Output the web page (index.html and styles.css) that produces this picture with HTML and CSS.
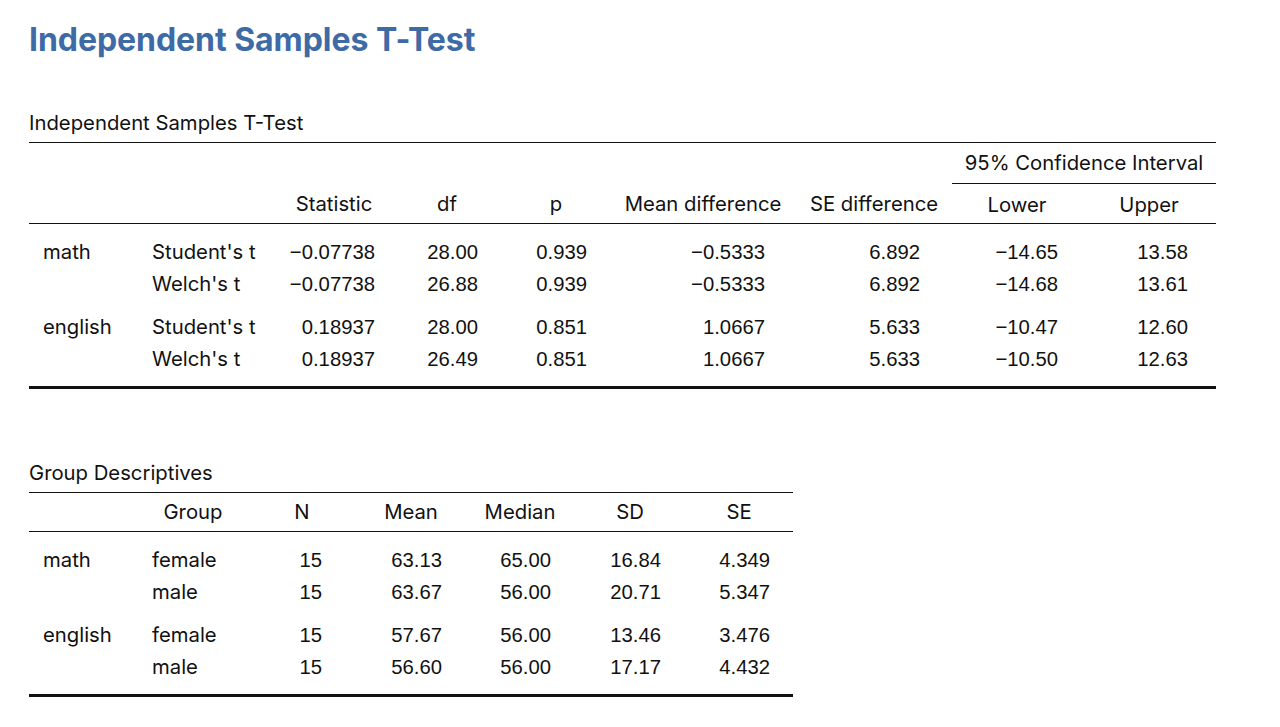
FILE: index.html
```html
<!DOCTYPE html>
<html lang="en">
<head>
<meta charset="utf-8">
<title>Independent Samples T-Test</title>
<link rel="stylesheet" href="styles.css">
</head>
<body>
<main class="page">
  <h1 class="title">Independent Samples T-Test</h1>

  <section class="analysis analysis-ttest">
    <div class="caption">Independent Samples T-Test</div>
    <table class="stats ttest">
      <colgroup>
        <col class="w110"><col class="w137"><col class="w116"><col class="w110"><col class="w108"><col class="w186"><col class="w156"><col class="w130"><col class="w134">
      </colgroup>
      <thead>
        <tr class="super">
          <th colspan="7"></th>
          <th colspan="2" class="ci">95% Confidence Interval</th>
        </tr>
        <tr class="heads">
          <th></th><th></th><th>Statistic</th><th>df</th><th>p</th><th>Mean difference</th><th>SE difference</th><th class="low">Lower</th><th class="low">Upper</th>
        </tr>
      </thead>
      <tbody>
        <tr><td class="var">math</td><td class="lab">Student's t</td><td>−0.07738</td><td>28.00</td><td>0.939</td><td>−0.5333</td><td>6.892</td><td>−14.65</td><td>13.58</td></tr>
        <tr><td class="var"></td><td class="lab">Welch's t</td><td>−0.07738</td><td>26.88</td><td>0.939</td><td>−0.5333</td><td>6.892</td><td>−14.68</td><td>13.61</td></tr>
      </tbody>
      <tbody>
        <tr><td class="var">english</td><td class="lab">Student's t</td><td>0.18937</td><td>28.00</td><td>0.851</td><td>1.0667</td><td>5.633</td><td>−10.47</td><td>12.60</td></tr>
        <tr><td class="var"></td><td class="lab">Welch's t</td><td>0.18937</td><td>26.49</td><td>0.851</td><td>1.0667</td><td>5.633</td><td>−10.50</td><td>12.63</td></tr>
      </tbody>
    </table>
  </section>

  <section class="analysis analysis-desc">
    <div class="caption">Group Descriptives</div>
    <table class="stats desc">
      <colgroup>
        <col class="w110"><col class="w108"><col class="w110"><col class="w108"><col class="w110"><col class="w110"><col class="w108">
      </colgroup>
      <thead>
        <tr class="heads">
          <th></th><th>Group</th><th>N</th><th>Mean</th><th>Median</th><th>SD</th><th>SE</th>
        </tr>
      </thead>
      <tbody>
        <tr><td class="var">math</td><td class="lab">female</td><td>15</td><td>63.13</td><td>65.00</td><td>16.84</td><td>4.349</td></tr>
        <tr><td class="var"></td><td class="lab">male</td><td>15</td><td>63.67</td><td>56.00</td><td>20.71</td><td>5.347</td></tr>
      </tbody>
      <tbody>
        <tr><td class="var">english</td><td class="lab">female</td><td>15</td><td>57.67</td><td>56.00</td><td>13.46</td><td>3.476</td></tr>
        <tr><td class="var"></td><td class="lab">male</td><td>15</td><td>56.60</td><td>56.00</td><td>17.17</td><td>4.432</td></tr>
      </tbody>
    </table>
  </section>
</main>
</body>
</html>
```

FILE: styles.css
```css
html, body {
  margin: 0;
  padding: 0;
  background: #ffffff;
}

body {
  font-family: Inter, "Liberation Sans", sans-serif;
  color: #111111;
}

.page {
  padding: 0 0 0 29px;
}

.title {
  margin: 0;
  padding-top: 20px;
  font-size: 32px;
  line-height: 40px;
  font-weight: 700;
  color: #3e6aa6;
  letter-spacing: -0.05px;
}

.analysis-ttest {
  margin-top: 51px;
}

.analysis-desc {
  margin-top: 72px;
}

.caption {
  font-size: 20.3px;
  line-height: 24px;
  padding-bottom: 7px;
}

.stats {
  border-collapse: collapse;
  table-layout: fixed;
  font-size: 20.3px;
  border-top: 1px solid #111111;
  border-bottom: 3px solid #111111;
}

.ttest { width: 1187px; }
.desc { width: 764px; }

.w108 { width: 108px; }
.w110 { width: 110px; }
.w116 { width: 116px; }
.w130 { width: 130px; }
.w134 { width: 134px; }
.w137 { width: 137px; }
.w156 { width: 156px; }
.w186 { width: 186px; }

.stats th {
  font-weight: 400;
  text-align: center;
  padding: 0;
  white-space: nowrap;
}

.super th {
  line-height: 40px;
}

.super .ci {
  border-bottom: 1px solid #111111;
}

.heads th {
  line-height: 39px;
  border-bottom: 1px solid #111111;
}

.heads th.low {
  padding-top: 3px;
  line-height: 36px;
}

.desc .heads th {
  line-height: 38px;
}

.stats td {
  padding: 0;
  line-height: 32px;
  text-align: right;
  white-space: nowrap;
  font-family: "Liberation Sans", Arial, sans-serif;
}

.stats tbody tr:first-child td {
  padding-top: 11px;
}

.stats tbody:first-of-type tr:first-child td {
  padding-top: 12px;
}

.stats tbody:last-child tr:last-child td {
  padding-bottom: 11px;
}

.stats td.var,
.stats td.lab {
  font-family: Inter, "Liberation Sans", sans-serif;
  text-align: left;
}

.stats td.var {
  padding-left: 14px;
}

.stats td.lab {
  padding-left: 13px;
}

/* right padding of numeric columns: t-test table */
.ttest td:nth-child(3) { padding-right: 17px; }
.ttest td:nth-child(4) { padding-right: 24px; }
.ttest td:nth-child(5) { padding-right: 23px; }
.ttest td:nth-child(6) { padding-right: 31px; }
.ttest td:nth-child(7) { padding-right: 32px; }
.ttest td:nth-child(8) { padding-right: 24px; }
.ttest td:nth-child(9) { padding-right: 28px; }

/* right padding of numeric columns: descriptives table */
.desc td:nth-child(3) { padding-right: 35px; }
.desc td:nth-child(4) { padding-right: 23px; }
.desc td:nth-child(5) { padding-right: 24px; }
.desc td:nth-child(6) { padding-right: 24px; }
.desc td:nth-child(7) { padding-right: 23px; }
```
